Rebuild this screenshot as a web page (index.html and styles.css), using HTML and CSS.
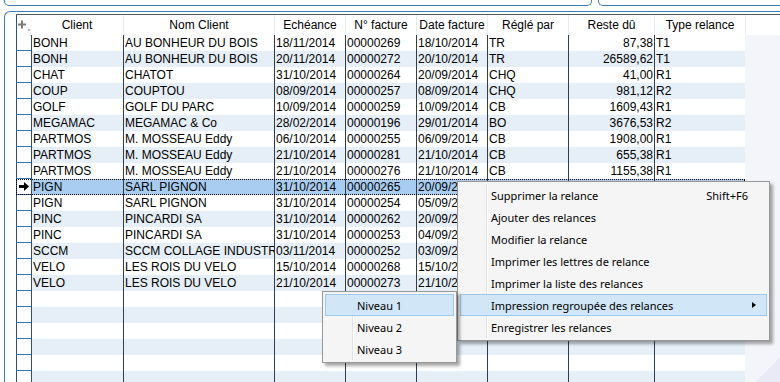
FILE: index.html
```html
<!DOCTYPE html>
<html>

<head>
    <meta charset="utf-8">
    <link rel="stylesheet" href="styles.css">
</head>

<body>
    <div class="top-panels">
        <div class="top-panel left"></div>
        <div class="top-panel right"></div>
    </div>

    <div class="main-panel">
        <div class="grid">
            <div class="grid-head">
                <div class="hcell ind">
                    <svg width="14" height="19" viewBox="0 0 14 19">
                        <path d="M1 9.5h8M5 5.5v8" stroke="#7b7b7b" stroke-width="2" fill="none" />
                        <path d="M10.5 14.5h3l-1.5 1.5z" fill="#7b7b7b" />
                    </svg>
                </div>
                <div class="hcell c-client">Client</div>
                <div class="hcell c-nom">Nom Client</div>
                <div class="hcell c-date">Echéance</div>
                <div class="hcell c-date">N° facture</div>
                <div class="hcell c-date">Date facture</div>
                <div class="hcell c-regle">Réglé par</div>
                <div class="hcell c-reste">Reste dû</div>
                <div class="hcell c-type">Type relance</div>
                <div class="hcell c-fill"></div>
            </div>
            <div class="grid-body">
                <div class="rows" id="rows"></div>
                <div class="filler"></div>
            </div>
        </div>
    </div>

    <div class="menu main-menu">
        <div class="menu-item"><span>Supprimer la relance</span><span class="shortcut">Shift+F6</span></div>
        <div class="menu-item"><span>Ajouter des relances</span></div>
        <div class="menu-item"><span>Modifier la relance</span></div>
        <div class="menu-item"><span>Imprimer les lettres de relance</span></div>
        <div class="menu-item"><span>Imprimer la liste des relances</span></div>
        <div class="menu-item active"><span>Impression regroupée des relances</span><span class="sub-arrow"></span></div>
        <div class="menu-item"><span>Enregistrer les relances</span></div>
    </div>

    <div class="menu sub-menu">
        <div class="menu-item active"><span>Niveau 1</span></div>
        <div class="menu-item"><span>Niveau 2</span></div>
        <div class="menu-item"><span>Niveau 3</span></div>
    </div>

    <script>
        const relances = [
            ['BONH', 'AU BONHEUR DU BOIS', '18/11/2014', '00000269', '18/10/2014', 'TR', '87,38', 'T1'],
            ['BONH', 'AU BONHEUR DU BOIS', '20/11/2014', '00000272', '20/10/2014', 'TR', '26589,62', 'T1'],
            ['CHAT', 'CHATOT', '31/10/2014', '00000264', '20/09/2014', 'CHQ', '41,00', 'R1'],
            ['COUP', 'COUPTOU', '08/09/2014', '00000257', '08/09/2014', 'CHQ', '981,12', 'R2'],
            ['GOLF', 'GOLF DU PARC', '10/09/2014', '00000259', '10/09/2014', 'CB', '1609,43', 'R1'],
            ['MEGAMAC', 'MEGAMAC & Co', '28/02/2014', '00000196', '29/01/2014', 'BO', '3676,53', 'R2'],
            ['PARTMOS', 'M. MOSSEAU Eddy', '06/10/2014', '00000255', '06/09/2014', 'CB', '1908,00', 'R1'],
            ['PARTMOS', 'M. MOSSEAU Eddy', '21/10/2014', '00000281', '21/10/2014', 'CB', '655,38', 'R1'],
            ['PARTMOS', 'M. MOSSEAU Eddy', '21/10/2014', '00000276', '21/10/2014', 'CB', '1155,38', 'R1'],
            ['PIGN', 'SARL PIGNON', '31/10/2014', '00000265', '20/09/2014', 'CHQ', '540,00', 'R1'],
            ['PIGN', 'SARL PIGNON', '31/10/2014', '00000254', '05/09/2014', 'CHQ', '312,40', 'R1'],
            ['PINC', 'PINCARDI SA', '31/10/2014', '00000262', '20/09/2014', 'CB', '720,00', 'R1'],
            ['PINC', 'PINCARDI SA', '31/10/2014', '00000253', '04/09/2014', 'CB', '98,50', 'R2'],
            ['SCCM', 'SCCM COLLAGE INDUSTRIE', '03/11/2014', '00000252', '03/09/2014', 'TR', '2450,00', 'R1'],
            ['VELO', 'LES ROIS DU VELO', '15/10/2014', '00000268', '15/10/2014', 'CB', '189,90', 'R1'],
            ['VELO', 'LES ROIS DU VELO', '21/10/2014', '00000273', '21/10/2014', 'CB', '64,20', 'R1']
        ];
        const cols = ['c-client', 'c-nom', 'c-date', 'c-date', 'c-date', 'c-regle', 'c-reste', 'c-type'];
        const selected = 9;
        const rowsEl = document.getElementById('rows');

        for (let i = 0; i < 22; i++) {
            const row = document.createElement('div');
            row.className = 'row' + (i % 2 ? ' alt' : '') + (i === selected ? ' selected' : '');

            const ind = document.createElement('div');
            ind.className = 'cell ind';
            if (i === selected) {
                ind.innerHTML = '<svg width="10" height="9" viewBox="0 0 10 9"><path d="M0 3h5V0l5 4.5L5 9V6H0z" fill="#000"/></svg>';
            }
            row.appendChild(ind);

            const data = relances[i] || [];
            cols.forEach((c, j) => {
                const cell = document.createElement('div');
                cell.className = 'cell ' + c;
                cell.textContent = data[j] || '';
                row.appendChild(cell);
            });
            rowsEl.appendChild(row);
        }
    </script>
</body>

</html>
```

FILE: styles.css
```css
body {
    margin: 0;
    width: 780px;
    height: 382px;
    overflow: hidden;
    background: #fff;
    font-family: 'Liberation Sans', Arial, sans-serif;
    font-size: 12px;
    color: #000;
}

/* upper frames, only their bottom edge is visible */
.top-panels {
    display: flex;
    height: 6px;
}

.top-panel {
    box-sizing: border-box;
    height: 6px;
    border: 1px solid #3d7ab8;
    border-top: none;
}

.top-panel.left {
    margin-left: 4px;
    width: 588px;
    border-radius: 0 0 5px 5px;
}

.top-panel.right {
    margin-left: 6px;
    flex: 1;
    border-right: none;
    border-radius: 0 0 0 5px;
}

.main-panel {
    margin: 5px 0 0 4px;
    padding: 2px 0 0 11px;
    border-top: 1px solid #3d7ab8;
    border-left: 1px solid #3d7ab8;
    border-top-left-radius: 6px;
}

.grid {
    border-top: 1px solid #4f5a66;
}

.grid-head {
    display: flex;
    height: 20px;
    background: #fff;
}

.hcell {
    box-sizing: border-box;
    height: 20px;
    line-height: 20px;
    text-align: center;
    border-left: 1px solid #e4ecf5;
    white-space: nowrap;
    overflow: hidden;
}

.hcell.ind {
    border-left: 1px solid #34506e;
}

.hcell.ind svg {
    display: block;
}

.ind {
    width: 15px;
}

.c-client {
    width: 92px;
}

.hcell.c-client {
    border-left: none;
}

.c-nom {
    width: 151px;
}

.c-date {
    width: 71px;
}

.c-regle {
    width: 81px;
}

.c-reste {
    width: 86px;
}

.c-type {
    width: 91px;
}

.c-fill {
    flex: 1;
}

.grid-body {
    display: flex;
}

.rows {
    width: 729px;
}

.filler {
    flex: 1;
    background: linear-gradient(135deg, #f4f4fb calc(100% - 21px), #eaeaf6 calc(100% - 21px));
}

.row {
    display: flex;
    height: 16px;
    background: #fff;
}

.row.alt {
    background: #e6eef7;
}

.cell {
    box-sizing: border-box;
    flex-shrink: 0;
    height: 16px;
    line-height: 16px;
    padding-left: 1px;
    border-left: 1px solid #2e3e50;
    white-space: nowrap;
    overflow: hidden;
}

.cell.ind {
    width: 15px;
    padding: 0;
    background: #fff;
    border-left: 1px solid #34506e;
    border-bottom: 1px solid #3a78b5;
    display: flex;
    align-items: center;
    justify-content: center;
}

.cell.c-client {
    border-left: 1px solid #34506e;
}

.cell.c-reste {
    text-align: right;
    padding: 0 1px 0 0;
}

.row.selected {
    background: #a8cdf0;
    outline: 1px dotted #000;
    outline-offset: -1px;
}

/* context menus */
.menu {
    position: absolute;
    box-sizing: border-box;
    padding: 2px;
    background: #f5f5f5;
    border: 1px solid #979797;
    box-shadow: 3px 3px 3px rgba(0, 0, 0, 0.35);
    font-family: 'Noto Sans', 'Open Sans', sans-serif;
    font-size: 11px;
}

.menu::before {
    content: '';
    position: absolute;
    top: 2px;
    bottom: 2px;
    width: 1px;
    background: #e2e2e2;
    box-shadow: 1px 0 0 #fff;
}

.main-menu {
    left: 457px;
    top: 181px;
    width: 313px;
}

.main-menu::before {
    left: 28px;
}

.sub-menu {
    left: 322px;
    top: 291px;
    width: 135px;
    z-index: 2;
}

.sub-menu::before {
    left: 29px;
}

.menu-item {
    position: relative;
    box-sizing: border-box;
    display: flex;
    justify-content: space-between;
    align-items: center;
    height: 22px;
    padding: 0 17px 0 30px;
    border: 1px solid transparent;
    white-space: nowrap;
}

.sub-menu .menu-item {
    padding-left: 31px;
}

.menu-item.active {
    background: #d1e6f7;
    border-color: #9ec9ee;
}

.shortcut {
    margin-right: 1px;
}

.sub-arrow {
    width: 0;
    height: 0;
    margin-right: -7px;
    border-top: 3.5px solid transparent;
    border-bottom: 3.5px solid transparent;
    border-left: 4px solid #000;
}
```
